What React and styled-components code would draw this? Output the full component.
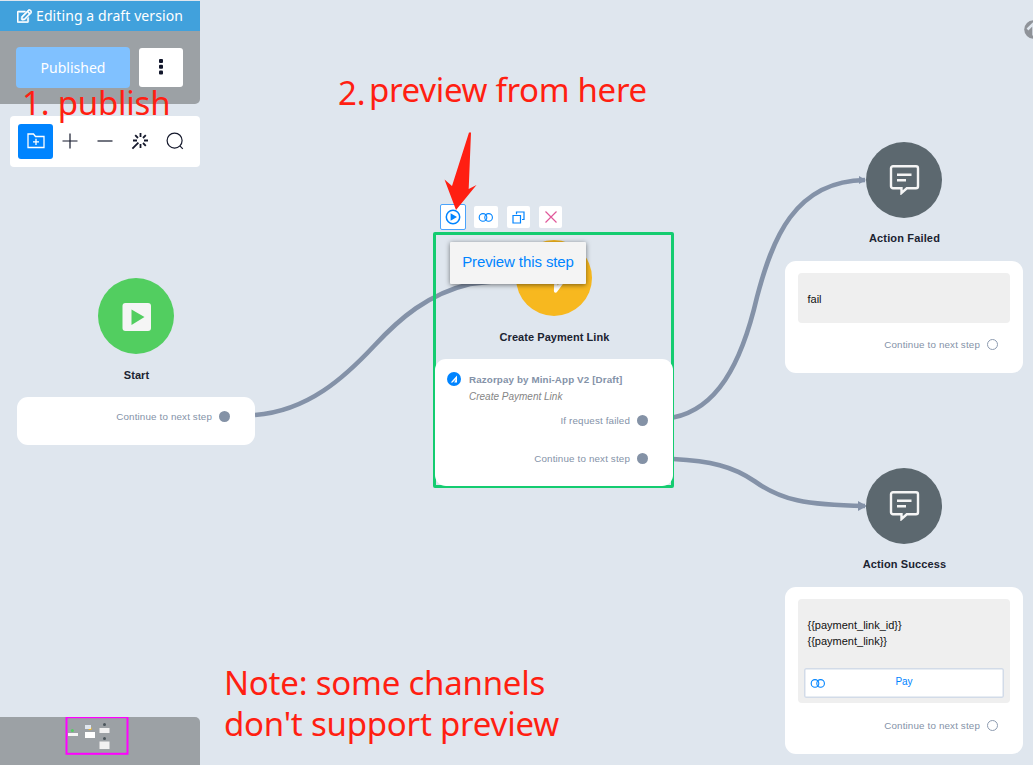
import React from "react";
import styled, { createGlobalStyle, css } from "styled-components";
import { FaRegEdit } from "react-icons/fa";

const Global = createGlobalStyle`
  * { box-sizing: border-box; }
  body { margin: 0; background: #dfe6ee; overflow: hidden; }
`;

const Page = styled.div`
  position: relative;
  width: 1033px;
  height: 765px;
  overflow: hidden;
  background: #dfe6ee;
  font-family: "Liberation Sans", Arial, sans-serif;
`;

const Sidebar = styled.aside`
  position: relative;
  display: flex;
  flex-direction: column;
  width: 200px;
  height: 765px;
  padding-top: 1px;
`;

const DraftBanner = styled.div`
  display: flex;
  align-items: center;
  gap: 4px;
  height: 30px;
  padding-left: 17px;
  background: #41a1dc;
  color: #fff;
  font: 14px/30px "Noto Sans", "Open Sans", sans-serif;
  letter-spacing: 0.1px;
  white-space: nowrap;
`;

const EditIcon = styled(FaRegEdit)`
  width: 15px;
  height: 14px;
  stroke: #fff;
  stroke-width: 22px;
`;

const PublishBar = styled.div`
  display: flex;
  gap: 9px;
  height: 73px;
  padding: 16px 16px 0;
  background: #9ca1a5;
  border-radius: 0 0 5px 0;
`;

const PublishButton = styled.button`
  width: 114px;
  height: 41px;
  padding: 0;
  border: 0;
  border-radius: 4px;
  background: #80c1ff;
  color: #fff;
  font: 14px "Noto Sans", "Open Sans", sans-serif;
`;

const MoreButton = styled.button`
  display: grid;
  place-items: center;
  width: 44px;
  height: 39px;
  margin-top: 1px;
  padding: 0 0 2px;
  border: 0;
  border-radius: 3px;
  background: #fff;
`;

const Toolbar = styled.div`
  display: flex;
  align-items: center;
  height: 51px;
  margin: 12px 0 0 10px;
  padding-left: 8px;
  background: #fff;
  border-radius: 4px;
`;

const Tool = styled.button`
  display: grid;
  place-items: center;
  width: 35px;
  height: 35px;
  padding: ${(p) => (p.$active ? "0 0 1px" : "0 2px 2px 0")};
  border: 0;
  border-radius: 3px;
  background: ${(p) => (p.$active ? "#0084ff" : "transparent")};
`;

const Minimap = styled.div`
  height: 48px;
  margin-top: auto;
  background: #9ca1a5;
  border-radius: 0 5px 0 0;
`;

const Edges = styled.svg`
  position: absolute;
  inset: 0;
`;

const Node = styled.section`
  position: absolute;
  left: ${(p) => p.$x}px;
  top: ${(p) => p.$y}px;
  display: flex;
  flex-direction: column;
  align-items: center;
  width: 238px;
`;

const Disc = styled.div`
  display: grid;
  place-items: center;
  width: 76px;
  height: 76px;
  border-radius: 50%;
  background: ${(p) => p.$color};
`;

const NodeTitle = styled.h3`
  height: 43px;
  margin: 0;
  padding-left: 1px;
  color: #1b2331;
  font-size: 11px;
  font-weight: 700;
  line-height: ${(p) => p.$line || 40}px;
  letter-spacing: ${(p) => p.$spacing || 0.05}px;
  white-space: nowrap;
`;

const Card = styled.div`
  display: flex;
  flex-direction: column;
  width: 238px;
  height: ${(p) => p.$h}px;
  padding: ${(p) => p.$pad || "12px"};
  background: #fff;
  border-radius: 11px;
`;

const Message = styled.div`
  height: ${(p) => p.$h}px;
  width: 212px;
  padding: ${(p) => p.$top}px 6px 0;
  background: #efefef;
  border-radius: 4px;
  margin-left: 1px;
  color: #111;
  font-size: 11px;
  line-height: 16px;
`;

const MessageText = styled.p`
  margin: 0;
  padding-left: 3.5px;
`;

const LinkButton = styled.div`
  display: grid;
  grid-template-columns: 18px 1fr 18px;
  align-items: center;
  height: 30px;
  margin-top: 19px;
  padding: 0 6px;
  box-shadow: inset 0 0 0 1.5px #d2dbe8;
  border-radius: 2px;
  background: #fff;
  color: #0084ff;
  font-size: 10px;
  line-height: 12px;
  text-align: center;
`;

const LinkLabel = styled.span`
  padding-bottom: 2px;
`;

const Output = styled.div`
  display: flex;
  align-items: center;
  justify-content: flex-end;
  gap: 7px;
  height: 16px;
  margin-top: ${(p) => p.$mt || 0}px;
  padding-right: 13px;
  color: #8492a8;
  font-size: 9.8px;
  letter-spacing: 0.15px;
  white-space: nowrap;
`;

const Port = styled.span`
  width: 11px;
  height: 11px;
  margin-top: 1px;
  border-radius: 50%;
  ${(p) =>
    p.$open
      ? css`border: 1px solid #8d9bb0;`
      : css`background: #8492a6;`}
`;

const AppRow = styled.div`
  display: flex;
  gap: 8px;
  height: 46px;
`;

const AppBadge = styled.svg`
  flex: none;
  margin-top: 1px;
`;

const AppName = styled.div`
  color: #8492a8;
  font-size: 9.8px;
  font-weight: 700;
  line-height: 17px;
  letter-spacing: 0.12px;
  white-space: nowrap;
`;

const AppAction = styled.div`
  color: #858585;
  font-size: 10px;
  font-style: italic;
  line-height: 17px;
`;

const Selection = styled.div`
  position: absolute;
  left: 433px;
  top: 232px;
  width: 241px;
  height: 256px;
  border: 3px solid #14cc70;
  border-radius: 2px;
`;

const StepActions = styled.div`
  position: absolute;
  left: 440px;
  top: 204px;
  display: flex;
  align-items: center;
  gap: 9px;
`;

const StepAction = styled.button`
  display: grid;
  place-items: center;
  width: ${(p) => (p.$focus ? 26 : p.$w || 23)}px;
  height: ${(p) => (p.$focus ? 26 : 22)}px;
  margin-right: ${(p) => (p.$focus ? -1 : 0)}px;
  padding: ${(p) => (p.$focus ? "0 1px 1px 0" : 0)};
  border: ${(p) => (p.$focus ? "1px solid #4aa3fb" : "0")};
  border-radius: 2px;
  background: #fff;
`;

const Tooltip = styled.div`
  position: absolute;
  left: 450px;
  top: 242px;
  width: 136px;
  height: 42px;
  background: #f4f4f4;
  border-radius: 1px;
  box-shadow: 0 1px 5px rgba(0, 0, 0, 0.5);
  color: #0084ff;
  font-size: 15px;
  line-height: 40px;
  letter-spacing: -0.1px;
  text-align: center;
  white-space: nowrap;
`;

const Annotation = styled.div`
  position: absolute;
  left: ${(p) => p.$x}px;
  top: ${(p) => p.$y}px;
  color: #ff1f12;
  font: 33px/41px "Noto Sans", "Open Sans", sans-serif;
  letter-spacing: ${(p) => p.$ls || -0.22}px;
  white-space: pre;
`;

const Pointer = styled.svg`
  position: absolute;
  left: 440px;
  top: 128px;
`;

const ScrollBadge = styled.svg`
  position: absolute;
  left: 1023px;
  top: 19px;
`;

const ink = { fill: "none", stroke: "#15192c", strokeWidth: 1.2 };

const Rings = () => (
  <svg width="16" height="10" viewBox="0 0 16 10" fill="none" stroke="#0084ff" strokeWidth="1.1">
    <circle cx="5" cy="5.4" r="3.8" />
    <circle cx="10.6" cy="5.4" r="3.8" />
  </svg>
);

const ChatIcon = () => (
  <svg width="32" height="30" viewBox="-1 0 32 30" fill="none" stroke="#f5f5f5" strokeWidth="2.4">
    <path d="M4 1.2H27a2 2 0 0 1 2 2V21.3a2 2 0 0 1-2 2H17.8L12.5 28V23.3H4a2 2 0 0 1-2-2V3.2a2 2 0 0 1 2-2Z" />
    <path d="M8 9.7H22.5M8 15.2H17" />
  </svg>
);

const Burst = () => (
  <svg width="18" height="18" viewBox="0 0 18 18" {...ink} strokeWidth="1.8">
    <path d="M9.5 1V5M9.5 12V16M2 8.5H6M13 8.5H17M4.2 3.2L7 6M14.8 3.2L12 6M12 11L14.8 13.8M7.4 10.6L1.4 16.6" />
  </svg>
);

export default function App() {
  return (
    <>
      <Global />
      <Page>
        <Edges width="1033" height="765" fill="none" stroke="#8492a8" strokeWidth="4.6">
          <path d="M255 415C308 411 345 377 374 346C400 318 428 294 470 284L516 279" />
          <path d="M673 417.5C716 409 741 366 757 297C772 240 794 181 865 180" />
          <path d="M673 459C710 461 733 466 755 481.5C781 500 805 505 865 506" />
          <path d="M859 176L866 180L859 184ZM858 501L867 506L858 511Z" fill="#8492a8" stroke="none" />
        </Edges>

        <Sidebar>
          <DraftBanner>
            <EditIcon />
            Editing a draft version
          </DraftBanner>
          <PublishBar>
            <PublishButton>Published</PublishButton>
            <MoreButton>
              <svg width="6" height="16" fill="#11162b">
                <rect x="1" y="0" width="4" height="4" rx="1" />
                <rect x="1" y="5.7" width="4" height="4" rx="1" />
                <rect x="1" y="11.4" width="4" height="4" rx="1" />
              </svg>
            </MoreButton>
          </PublishBar>
          <Toolbar>
            <Tool $active>
              <svg width="18" height="16" fill="none" stroke="#fff" strokeWidth="1.3">
                <path d="M1 14.5V1H6.5L8.5 3.5H17V14.5ZM9 5.8V12M6 8.9H12" />
              </svg>
            </Tool>
            <Tool>
              <svg width="16" height="16" {...ink}><path d="M8 .5V15.5M.5 8H15.5" /></svg>
            </Tool>
            <Tool>
              <svg width="16" height="16" {...ink}><path d="M.5 8H15.5" /></svg>
            </Tool>
            <Tool><Burst /></Tool>
            <Tool>
              <svg width="18" height="18" {...ink}>
                <circle cx="8.6" cy="8.6" r="7.5" />
                <path d="M13.9 13.8L16.8 16.8" />
              </svg>
            </Tool>
          </Toolbar>
          <Minimap>
            <svg width="200" height="48">
              <rect x="66.5" y="0.2" width="61" height="36.6" fill="none" stroke="#ff00ff" strokeWidth="2" />
              <circle cx="72.4" cy="13.5" r="1.5" fill="#52ce60" />
              <rect x="68" y="16" width="10" height="3" fill="#f4f4f4" />
              <circle cx="90" cy="11.5" r="1.7" fill="#f7b81f" />
              <rect x="85" y="8" width="6" height="4" fill="#dfe6ee" />
              <rect x="85" y="15" width="10" height="6" fill="#fff" />
              <circle cx="104.5" cy="7.5" r="1.5" fill="#4b565c" />
              <rect x="99.5" y="11" width="10" height="5" fill="#f1f1f1" />
              <circle cx="104.5" cy="21.5" r="1.5" fill="#4b565c" />
              <rect x="99.5" y="24.5" width="10" height="7.5" fill="#f1f1f1" />
            </svg>
          </Minimap>
        </Sidebar>

        <Node $x={17} $y={278}>
          <Disc $color="#52ce60">
            <svg width="32" height="30">
              <rect x="2.5" y="2" width="28.5" height="28" rx="3" fill="#f5f5f5" />
              <path d="M11.5 8.5L24.5 16L11.5 24Z" fill="#52ce60" />
            </svg>
          </Disc>
          <NodeTitle $line={42}>Start</NodeTitle>
          <Card $h={48} $pad="11px 12px">
            <Output>Continue to next step<Port /></Output>
          </Card>
        </Node>

        <Selection />
        <Node $x={435} $y={240}>
          <Disc $color="#f7b81f">
            <svg width="30" height="34" fill="none" stroke="#fff" strokeWidth="3.4" strokeLinecap="round" strokeLinejoin="round">
              <path d="M17 18L16.6 30L24 20" />
            </svg>
          </Disc>
          <NodeTitle $line={42}>Create Payment Link</NodeTitle>
          <Card $h={127} $pad="12px 12px">
            <AppRow>
              <AppBadge width="14" height="14">
                <circle cx="7" cy="7" r="7" fill="#0084ff" />
                <path d="M10 3.5V10.5H7.2L9 7L5.5 10.5H3.7Z" fill="#fff" />
              </AppBadge>
              <div>
                <AppName>Razorpay by Mini-App V2 [Draft]</AppName>
                <AppAction>Create Payment Link</AppAction>
              </div>
            </AppRow>
            <Output $mt={-5}>If request failed<Port /></Output>
            <Output $mt={22}>Continue to next step<Port /></Output>
          </Card>
        </Node>

        <Node $x={785} $y={142}>
          <Disc $color="#5c686f"><ChatIcon /></Disc>
          <NodeTitle $spacing={0.15}>Action Failed</NodeTitle>
          <Card $h={112}>
            <Message $h={50} $top={18}><MessageText>fail</MessageText></Message>
            <Output $mt={13}>Continue to next step<Port $open /></Output>
          </Card>
        </Node>

        <Node $x={785} $y={468}>
          <Disc $color="#5c686f"><ChatIcon /></Disc>
          <NodeTitle $spacing={0.12}>Action Success</NodeTitle>
          <Card $h={167}>
            <Message $h={104} $top={18}>
              <MessageText>{"{{payment_link_id}}"}<br />{"{{payment_link}}"}</MessageText>
              <LinkButton><Rings /><LinkLabel>Pay</LinkLabel></LinkButton>
            </Message>
            <Output $mt={14}>Continue to next step<Port $open /></Output>
          </Card>
        </Node>

        <StepActions>
          <StepAction $focus>
            <svg width="16" height="16" fill="none" stroke="#0084ff" strokeWidth="1.5">
              <circle cx="8" cy="8" r="6.7" />
              <path d="M5.6 4.2L12 8L5.6 11.8Z" fill="#0084ff" stroke="none" />
            </svg>
          </StepAction>
          <StepAction $w={24}><Rings /></StepAction>
          <StepAction>
            <svg width="13" height="13" fill="none" stroke="#0084ff" strokeWidth="1.2">
              <path d="M1 4.5H8.5V12H1ZM4.5 3.2V1H12V8.5H10" />
            </svg>
          </StepAction>
          <StepAction>
            <svg width="12" height="12" stroke="#e0589a" strokeWidth="1.2">
              <path d="M.5 .5L11.5 11.5M11.5 .5L.5 11.5" />
            </svg>
          </StepAction>
        </StepActions>
        <Tooltip>Preview this step</Tooltip>

        <Pointer width="40" height="84">
          <path d="M31 4.5L28.7 61L36.5 57L16 82L4.5 51.5L12 58L29 4.5Z" fill="#ff1f12" />
        </Pointer>
        <ScrollBadge width="20" height="20">
          <circle cx="10.5" cy="10.5" r="9.3" fill="#8f9399" />
          <path d="M4.5 10.5L10.5 4.5L16.5 10.5M10.5 5.5V16.5" fill="none" stroke="#dfe6ee" strokeWidth="2.5" />
        </ScrollBadge>

        <Annotation $x={22} $y={82}>1. publish</Annotation>
        <Annotation $x={338} $y={72}>2.</Annotation>
        <Annotation $x={369} $y={69} $ls={-0.32}>preview from here</Annotation>
        <Annotation $x={224} $y={662}>{"Note: some channels\ndon't support preview"}</Annotation>
      </Page>
    </>
  );
}
